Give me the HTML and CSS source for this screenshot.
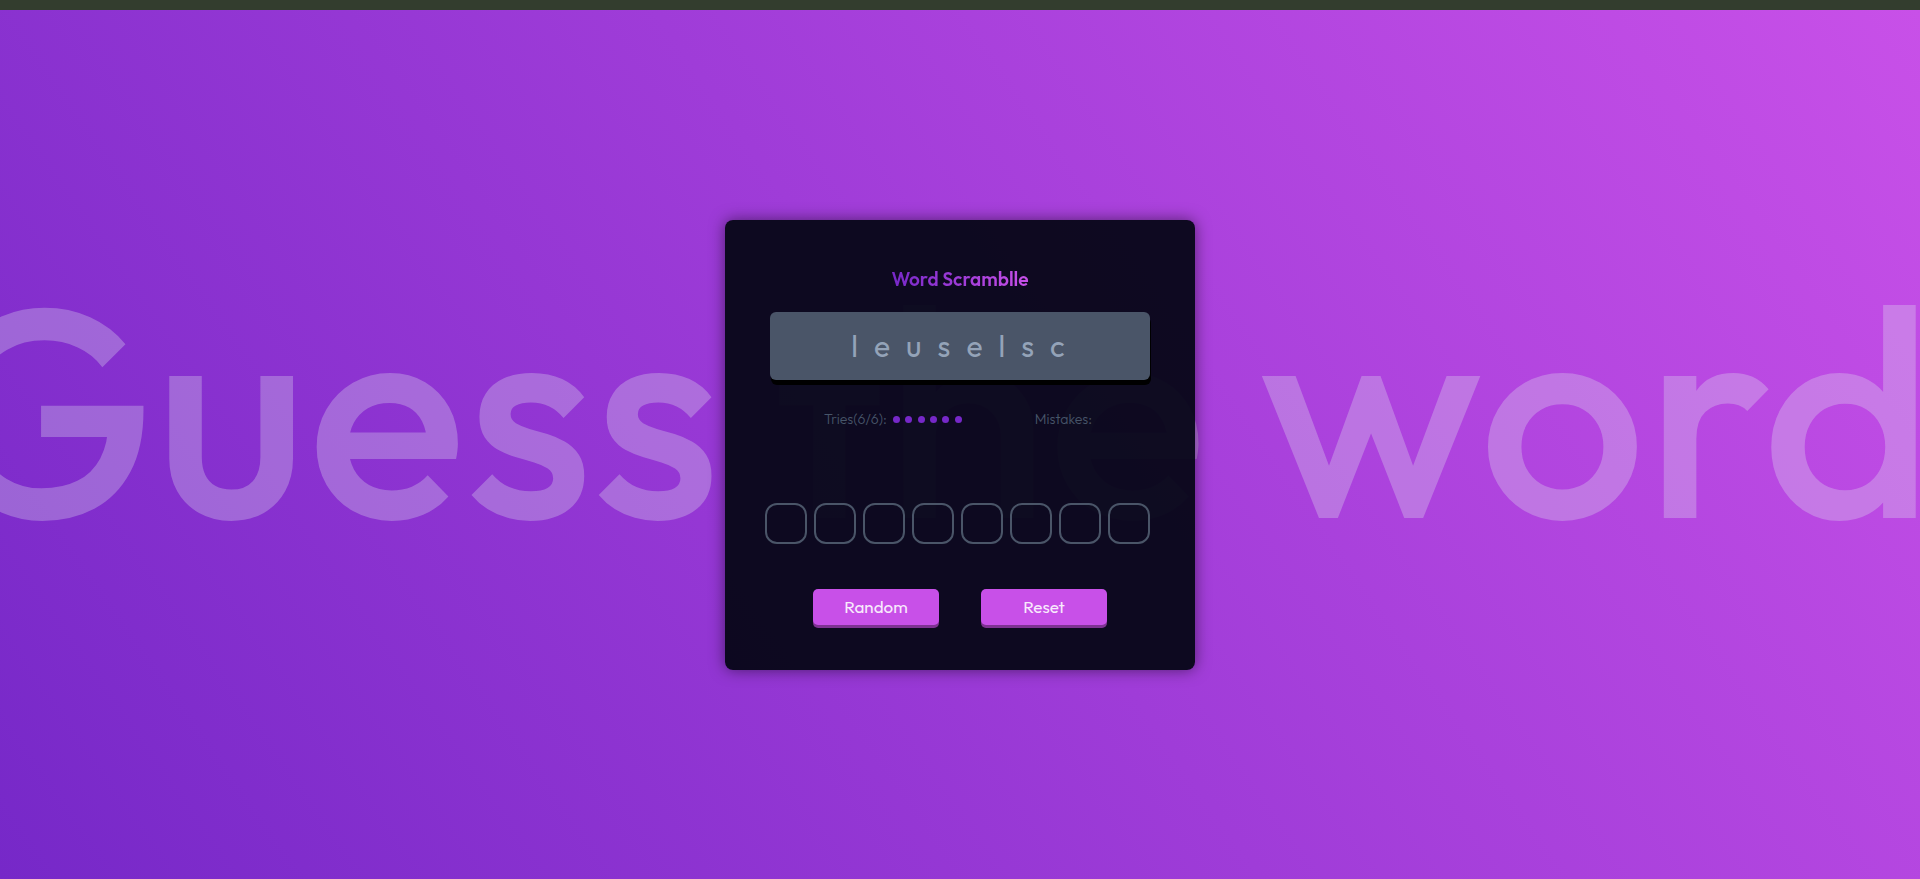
FILE: index.html
```html
<!DOCTYPE html>
<html lang="en">
<head>
<meta charset="utf-8">
<title>Word Scramblle</title>
<link rel="stylesheet" href="styles.css">
</head>
<body>
<main class="stage">
  <p class="backdrop"><span>Guess</span> <span>the</span> <span>word</span></p>
  <section class="card">
    <h1 class="title">Word Scramblle</h1>
    <div class="scrambled"><span>l</span><span>e</span><span>u</span><span>s</span><span>e</span><span>l</span><span>s</span><span>c</span></div>
    <div class="status">
      <div class="tries">Tries(6/6):
        <span class="dots"><i class="dot"></i><i class="dot"></i><i class="dot"></i><i class="dot"></i><i class="dot"></i><i class="dot"></i></span>
      </div>
      <div class="mistakes">Mistakes:</div>
    </div>
    <div class="cells">
      <input class="cell" type="text" maxlength="1" aria-label="Letter 1">
      <input class="cell" type="text" maxlength="1" aria-label="Letter 2">
      <input class="cell" type="text" maxlength="1" aria-label="Letter 3">
      <input class="cell" type="text" maxlength="1" aria-label="Letter 4">
      <input class="cell" type="text" maxlength="1" aria-label="Letter 5">
      <input class="cell" type="text" maxlength="1" aria-label="Letter 6">
      <input class="cell" type="text" maxlength="1" aria-label="Letter 7">
      <input class="cell" type="text" maxlength="1" aria-label="Letter 8">
    </div>
    <div class="actions">
      <button class="button" type="button">Random</button>
      <button class="button" type="button">Reset</button>
    </div>
  </section>
</main>
</body>
</html>
```
FILE: styles.css
```css
* { box-sizing: border-box; }

body {
  margin: 0;
  min-height: 100vh;
  padding-top: 10px;
  display: flex;
  background: #333d2e;
  font-family: Outfit, Lato, sans-serif;
}

.stage {
  position: relative;
  flex: 1;
  display: flex;
  align-items: center;
  justify-content: center;
  padding-top: 1px;
  overflow: hidden;
  background: linear-gradient(55deg, #7628c8, #c850e8);
}

.backdrop {
  position: absolute;
  inset: 0;
  display: flex;
  align-items: center;
  justify-content: center;
  gap: 53px;
  margin: 0;
  padding: 0 60px 72px 0;
  font-size: 296px;
  font-weight: 500;
  line-height: 1;
  white-space: nowrap;
  color: rgba(226, 232, 240, 0.3);
}

.card {
  position: relative;
  width: 470px;
  max-width: 100%;
  padding: 47px 40px 45px;
  border-radius: 8px;
  background: rgba(5, 6, 22, 0.95);
  box-shadow: 0 0 15px rgba(0, 0, 0, 0.5);
}

.title {
  width: fit-content;
  margin: 0 auto 21px;
  font-size: 19px;
  line-height: 24px;
  font-weight: 600;
  background: linear-gradient(90deg, #7628c8, #c850e8);
  background-clip: text;
  color: transparent;
}

.scrambled {
  display: flex;
  align-items: center;
  justify-content: center;
  gap: 16px;
  height: 68px;
  margin: 0 5px;
  padding-right: 4px;
  border-radius: 6px;
  background: #4a5568;
  box-shadow: 1px 5px 0 #000;
  font-size: 30px;
  color: #94a3b8;
}

.status {
  display: flex;
  justify-content: space-between;
  margin: 29px 63px 74px 59px;
  font-size: 14px;
  line-height: 20px;
  font-weight: 300;
  color: #475569;
}

.tries {
  display: flex;
  align-items: center;
  gap: 6px;
}

.dots {
  display: flex;
  justify-content: space-between;
  width: 69px;
}

.dot {
  width: 7px;
  height: 7px;
  border-radius: 50%;
  background: #7628c8;
}

.cells {
  display: flex;
  gap: 7px;
}

.cell {
  width: 42px;
  height: 41px;
  padding: 0;
  border: 2px solid #4a5568;
  border-radius: 12px;
  background: transparent;
  color: #94a3b8;
  font: inherit;
  text-align: center;
}

.actions {
  display: flex;
  justify-content: center;
  gap: 42px;
  margin-top: 45px;
}

.button {
  width: 126px;
  height: 36px;
  padding: 0;
  border: 0;
  border-radius: 5px;
  background: #c850e8;
  box-shadow: 0 3px 0 #7e3292;
  color: #f8eafc;
  font: 400 17px/24px Outfit, Lato, sans-serif;
}
```
